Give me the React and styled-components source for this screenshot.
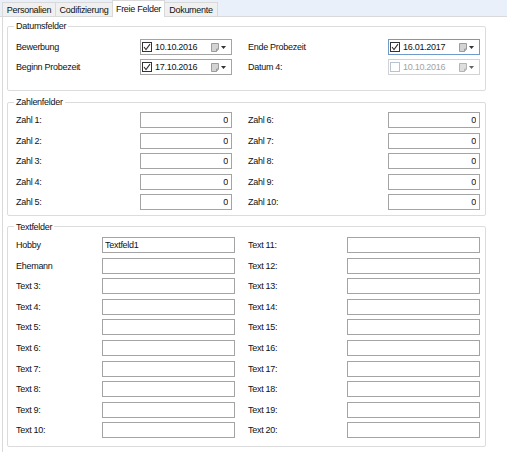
import React from "react";
import styled, { createGlobalStyle } from "styled-components";

const GlobalStyle = createGlobalStyle`
  html, body { margin: 0; padding: 0; background: #fff; }
  body {
    font-family: "Liberation Sans", Arial, sans-serif;
    font-size: 9px;
    letter-spacing: -0.28px;
    color: #111;
  }
`;

const Window = styled.div`
  width: 507px;
  height: 452px;
  overflow: hidden;
  background: #fff;
`;

const TabStrip = styled.div`
  box-sizing: border-box;
  display: flex;
  align-items: flex-end;
  height: 17px;
  padding-left: 2px;
  background: #e9f0fa;
  border-bottom: 1px solid #d9d9d9;
`;

const Tab = styled.div`
  box-sizing: border-box;
  position: relative;
  z-index: ${(p) => (p.$active ? 1 : 0)};
  width: ${(p) => p.$w}px;
  height: ${(p) => (p.$active ? 17 : 14)}px;
  margin-bottom: ${(p) => (p.$active ? -1 : 0)}px;
  margin-left: ${(p) => (p.$first ? 0 : -1)}px;
  display: flex;
  align-items: center;
  justify-content: center;
  padding-bottom: ${(p) => (p.$active ? 1 : 0)}px;
  border: 1px solid #d9d9d9;
  border-bottom: none;
  background: ${(p) => (p.$active ? "#fff" : "#f0f0f0")};
  white-space: nowrap;
`;

const Panel = styled.div`
  display: flex;
  flex-direction: column;
  gap: 5px;
  margin-left: 2px;
  padding: 3px 0 0 4px;
  border-left: 1px solid #d9d9d9;
  height: 440px;
`;

const GroupBox = styled.fieldset`
  box-sizing: border-box;
  width: 479px;
  min-inline-size: 0;
  margin: 0;
  padding: ${(p) => p.$pt}px 5px ${(p) => p.$pb}px 8px;
  border: 1px solid #dcdcdc;
  border-radius: 2px;
`;

const Caption = styled.legend`
  margin-left: -2px;
  padding: 0 2px;
  line-height: 12px;
`;

const FieldGrid = styled.div`
  display: grid;
  grid-template-columns: ${(p) => p.$left}px ${(p) => p.$right}px;
  column-gap: ${(p) => p.$colGap}px;
  grid-auto-rows: 16px;
  row-gap: ${(p) => p.$rowGap}px;
`;

const Field = styled.div`
  display: grid;
  grid-template-columns: ${(p) => p.$labelW}px 1fr;
  align-items: center;
  height: 16px;
`;

const Label = styled.span`
  white-space: nowrap;
  line-height: 16px;
`;

const TextBox = styled.input`
  box-sizing: border-box;
  width: 100%;
  height: 16px;
  margin: 0;
  padding: 0 ${(p) => (p.$align === "right" ? 3 : 2)}px 0 2px;
  border: 1px solid #a4a4a4;
  border-radius: 0;
  background: #fff;
  color: #111;
  font: inherit;
  letter-spacing: inherit;
  text-align: ${(p) => p.$align || "left"};
  outline: none;
`;

const DateBox = styled.div`
  box-sizing: border-box;
  display: flex;
  align-items: center;
  height: 16px;
  padding: 0 5px 0 1px;
  border: 1px solid
    ${(p) => (p.$focused ? "#6f9bcb" : p.$disabled ? "#d2d2d2" : "#a4a4a4")};
  background: #fff;
  color: ${(p) => (p.$disabled ? "#a3a3a3" : "#111")};
`;

const CheckBox = styled.span`
  box-sizing: border-box;
  display: flex;
  align-items: center;
  justify-content: center;
  width: 10px;
  height: 10px;
  border: 1px solid ${(p) => (p.$disabled ? "#b7c3d2" : "#333")};
  background: #fff;
`;

const DateText = styled.span`
  margin-left: 3px;
  white-space: nowrap;
`;

const DropParts = styled.span`
  display: flex;
  align-items: center;
  gap: 2px;
  margin-left: auto;
  opacity: ${(p) => (p.$disabled ? 0.75 : 1)};
`;

function CalendarGlyph() {
  return (
    <svg width="8" height="9" viewBox="0 0 8 9">
      <path d="M0.5 0.5H7.5V6L5.5 8.5H0.5Z" fill="#d3d3d3" stroke="#9c9c9c" />
      <path d="M5.5 8.5V6H7.5" fill="none" stroke="#9c9c9c" />
    </svg>
  );
}

function ArrowGlyph() {
  return (
    <svg width="5" height="3" viewBox="0 0 5 3">
      <path d="M0 0H5L2.5 3Z" fill="#333" />
    </svg>
  );
}

function DatePicker({ date, checked, focused, disabled }) {
  return (
    <DateBox $focused={focused} $disabled={disabled}>
      <CheckBox $disabled={disabled}>
        {checked && (
          <svg width="8" height="8" viewBox="0 0 8 8">
            <path d="M1 4L3 6.5L7 1.2" fill="none" stroke="#333" strokeWidth="1.1" />
          </svg>
        )}
      </CheckBox>
      <DateText>{date}</DateText>
      <DropParts $disabled={disabled}>
        <CalendarGlyph />
        <ArrowGlyph />
      </DropParts>
    </DateBox>
  );
}

const tabs = ["Personalien", "Codifizierung", "Freie Felder", "Dokumente"];
const tabWidths = [54, 58, 53, 54];

const dates = [
  [
    { label: "Bewerbung", date: "10.10.2016", checked: true },
    { label: "Ende Probezeit", date: "16.01.2017", checked: true, focused: true },
  ],
  [
    { label: "Beginn Probezeit", date: "17.10.2016", checked: true },
    { label: "Datum 4:", date: "10.10.2016", disabled: true },
  ],
];

const numbers = [1, 2, 3, 4, 5].map((n) => [`Zahl ${n}:`, `Zahl ${n + 5}:`]);

const texts = [
  [{ label: "Hobby", value: "Textfeld1" }, { label: "Text 11:" }],
  [{ label: "Ehemann" }, { label: "Text 12:" }],
  ...[3, 4, 5, 6, 7, 8, 9, 10].map((n) => [
    { label: `Text ${n}:` },
    { label: `Text ${n + 10}:` },
  ]),
];

export default function App() {
  return (
    <Window>
      <GlobalStyle />
      <TabStrip>
        {tabs.map((t, i) => (
          <Tab key={t} $w={tabWidths[i]} $first={i === 0} $active={i === 2}>
            {t}
          </Tab>
        ))}
      </TabStrip>
      <Panel>
        <GroupBox $pt={7} $pb={15}>
          <Caption>Datumsfelder</Caption>
          <FieldGrid $left={216} $right={232} $colGap={16} $rowGap={4}>
            {dates.flat().map((d, i) => (
              <Field key={d.label} $labelW={i % 2 === 0 ? 124 : 140}>
                <Label>{d.label}</Label>
                <DatePicker {...d} />
              </Field>
            ))}
          </FieldGrid>
        </GroupBox>

        <GroupBox $pt={4} $pb={4.6}>
          <Caption>Zahlenfelder</Caption>
          <FieldGrid $left={216} $right={232} $colGap={16} $rowGap={4.6}>
            {numbers.flat().map((label, i) => (
              <Field key={label} $labelW={i % 2 === 0 ? 124 : 140}>
                <Label>{label}</Label>
                <TextBox readOnly value="0" $align="right" />
              </Field>
            ))}
          </FieldGrid>
        </GroupBox>

        <GroupBox $pt={4} $pb={7.6}>
          <Caption>Textfelder</Caption>
          <FieldGrid $left={219} $right={232} $colGap={13} $rowGap={4.6}>
            {texts.flat().map((f, i) => (
              <Field key={f.label} $labelW={i % 2 === 0 ? 86 : 99}>
                <Label>{f.label}</Label>
                <TextBox readOnly value={f.value || ""} />
              </Field>
            ))}
          </FieldGrid>
        </GroupBox>
      </Panel>
    </Window>
  );
}
